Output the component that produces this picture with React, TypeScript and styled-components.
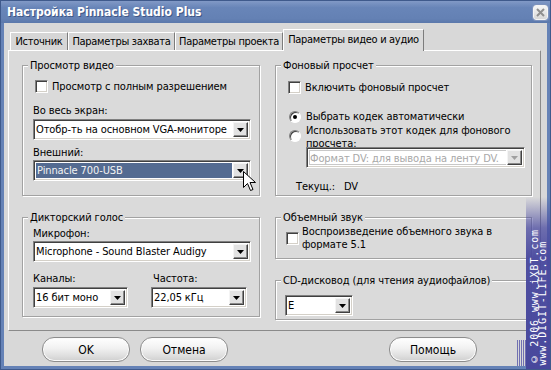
import React from 'react';
import styled, { createGlobalStyle } from 'styled-components';

const FONT = `"DejaVu Sans Condensed", "DejaVu Sans", Tahoma, sans-serif`;

const Global = createGlobalStyle`
  html, body { margin: 0; padding: 0; background: #d8d8d8; }
  body { font-family: ${FONT}; font-size: 11px; color: #000; letter-spacing: -0.1px; }
  * { box-sizing: border-box; }
`;

const Window = styled.div`
  position: relative;
  width: 551px;
  height: 370px;
  display: flex;
  flex-direction: column;
  background: #6582b6;
  border: 1px solid #3f5a8c;
  overflow: hidden;
`;

const TitleBar = styled.div`
  height: 22px;
  flex: none;
  display: flex;
  align-items: center;
  justify-content: space-between;
  padding: 0 2px 0 6px;
  background: linear-gradient(#8199c6, #6885b8 30%, #6481b4 80%, #5b78ab);
`;

const Title = styled.span`
  color: #fff;
  font-weight: bold;
  font-size: 12px;
  letter-spacing: 0;
  text-shadow: 1px 1px 0 #3f5785;
`;

const CloseBtn = styled.div`
  width: 15px;
  height: 15px;
  border-radius: 3px;
  border: 1px solid #f4f4f4;
  background: linear-gradient(#f6f6f6, #d8d8d8);
  box-shadow: 0 0 0 1px #7e93bd;
  display: flex;
  align-items: center;
  justify-content: center;
`;

const Client = styled.div`
  flex: 1;
  margin: 0 3px 3px;
  background: #d8d8d8;
  display: flex;
  flex-direction: column;
  padding: 0 6px 0 4px;
`;

const TabRow = styled.div`
  height: 27px;
  flex: none;
  display: flex;
  align-items: flex-end;
  padding-left: 2px;
  position: relative;
  z-index: 1;
`;

const Tab = styled.div<{ $w: number; $active?: boolean }>`
  width: ${p => p.$w}px;
  height: ${p => (p.$active ? 22 : 18)}px;
  margin-bottom: ${p => (p.$active ? -1 : 0)}px;
  display: flex;
  align-items: center;
  justify-content: center;
  padding-bottom: ${p => (p.$active ? 2 : 0)}px;
  background: ${p => (p.$active ? '#dadada' : '#d6d6d6')};
  border-top: 1px solid #fff;
  border-left: 1px solid #fff;
  border-right: 1px solid #7c7c7c;
  white-space: nowrap;
  letter-spacing: -0.3px;
`;

const Panel = styled.div`
  height: 281px;
  flex: none;
  background: #dadada;
  border: 1px solid;
  border-color: #fff #8a8a8a #8a8a8a #fff;
  padding: 8px 0 0 13px;
  display: grid;
  grid-template-columns: 238px 257px;
  column-gap: 15px;
  align-items: start;
`;

const Column = styled.div<{ $gap: number }>`
  display: flex;
  flex-direction: column;
  gap: ${p => p.$gap}px;
`;

const Group = styled.fieldset<{ $h: number }>`
  margin: 0;
  padding: 0;
  min-width: 0;
  height: ${p => p.$h}px;
  border: 1px solid #a2a2a2;
  box-shadow: 1px 1px 0 #fff, inset 1px 1px 0 #fff;
`;

const Legend = styled.legend`
  margin-left: 5px;
  padding: 0 2px;
  line-height: 13px;
  background: #dadada;
`;

const GroupBody = styled.div<{ $pl: number }>`
  padding-left: ${p => p.$pl}px;
  display: flex;
  flex-direction: column;
  align-items: flex-start;
`;

const Label = styled.div<{ $mt?: number; $ml?: number }>`
  line-height: 13px;
  margin-top: ${p => p.$mt ?? 0}px;
  margin-left: ${p => p.$ml ?? 0}px;
  white-space: nowrap;
`;

const CheckRow = styled.div<{ $mt?: number; $ml?: number; $gap?: number }>`
  display: flex;
  align-items: center;
  gap: ${p => p.$gap ?? 4}px;
  margin-top: ${p => p.$mt ?? 0}px;
  margin-left: ${p => p.$ml ?? 0}px;
  line-height: 13px;
`;

const CheckBox = styled.span`
  width: 13px;
  height: 13px;
  flex: none;
  background: #fff;
  border: 1px solid;
  border-color: #808080 #fff #fff #808080;
  box-shadow: inset 1px 1px 0 #404040, inset -1px -1px 0 #d4d0c8;
`;

const Radio = styled.span<{ $checked?: boolean }>`
  width: 12px;
  height: 12px;
  flex: none;
  border-radius: 50%;
  background: #fff;
  border: 1px solid;
  border-color: #808080 #fff #fff #808080;
  box-shadow: inset 1px 1px 0 #404040;
  display: flex;
  align-items: center;
  justify-content: center;
  &::after {
    content: '';
    width: 4px;
    height: 4px;
    border-radius: 50%;
    background: ${p => (p.$checked ? '#000' : 'transparent')};
  }
`;

const ClipText = styled.div<{ $h: number }>`
  height: ${p => p.$h}px;
  overflow: hidden;
  line-height: 13px;
`;

const Combo = styled.div<{ $w: number; $mt?: number; $ml?: number }>`
  width: ${p => p.$w}px;
  height: 21px;
  margin-top: ${p => p.$mt ?? 0}px;
  margin-left: ${p => p.$ml ?? 0}px;
  display: flex;
  align-items: stretch;
  padding: 2px;
  background: #fff;
  border: 1px solid;
  border-color: #808080 #fff #fff #808080;
  box-shadow: inset 1px 1px 0 #404040, inset -1px -1px 0 #d4d0c8;
`;

const ComboField = styled.div<{ $selected?: boolean; $disabled?: boolean }>`
  flex: 1;
  min-width: 0;
  line-height: 15px;
  padding-left: ${p => (p.$selected ? 1 : 0)}px;
  margin-right: 1px;
  white-space: nowrap;
  overflow: hidden;
  background: ${p => (p.$selected ? '#546b91' : 'transparent')};
  color: ${p => (p.$selected ? '#f2f2f2' : p.$disabled ? '#a8a8a8' : '#000')};
  border: ${p => (p.$disabled ? '1px solid #c8c8c8' : 'none')};
  border-right: none;
`;

const ComboArrow = styled.div<{ $disabled?: boolean }>`
  width: 15px;
  flex: none;
  background: #e2e2e2;
  border: 1px solid;
  border-color: #f4f4f4 #404040 #404040 #f4f4f4;
  box-shadow: inset -1px -1px 0 #8a8a8a;
  display: flex;
  align-items: center;
  justify-content: center;
  padding-right: 1px;
  color: ${p => (p.$disabled ? '#a0a0a0' : '#000')};
`;

const PairRow = styled.div<{ $mt: number }>`
  display: flex;
  margin-top: ${p => p.$mt}px;
  gap: 23px;
`;

const PairCol = styled.div`
  display: flex;
  flex-direction: column;
  align-items: flex-start;
  gap: 2px;
`;

const CurRow = styled.div`
  display: flex;
  margin-top: 12px;
  margin-left: 8px;
  line-height: 13px;
`;

const CurLabel = styled.span`
  width: 48px;
`;

const Footer = styled.div`
  flex: 1;
  display: flex;
  align-items: flex-start;
  padding: 6px 64px 0 34px;
  gap: 10px;
`;

const Button = styled.div<{ $push?: boolean }>`
  width: 88px;
  height: 25px;
  margin-left: ${p => (p.$push ? 'auto' : '0')};
  border-radius: 12px;
  border: 1px solid #8c8c8c;
  background: linear-gradient(#ffffff, #f1f1f1 45%, #e0e0e0 75%, #cfcfcf);
  box-shadow: inset 0 0 0 1px #fafafa;
  display: flex;
  align-items: center;
  justify-content: center;
  font-size: 12px;
  letter-spacing: 0;
`;

const Watermark = styled.div`
  position: absolute;
  right: 0;
  top: 196px;
  bottom: 0;
  width: 24px;
  background: linear-gradient(rgba(74, 74, 160, 0), rgba(74, 74, 160, 0.75) 18%, rgba(72, 72, 158, 0.95) 35%, #48489c);
`;

const WatermarkText = styled.div`
  position: absolute;
  left: 5px;
  bottom: 4px;
  writing-mode: vertical-rl;
  transform: rotate(180deg);
  font-family: "DejaVu Sans Mono", "Liberation Mono", monospace;
  font-size: 10px;
  letter-spacing: 0.9px;
  line-height: 8px;
  color: #fff;
  white-space: nowrap;
`;

const Stripes = styled.div`
  position: absolute;
  left: -9px;
  bottom: 3px;
  width: 9px;
  height: 26px;
  background: repeating-linear-gradient(to right, #5656a8 0 1px, transparent 1px 2px);
  opacity: 0.8;
`;

const Cursor = styled.svg`
  position: absolute;
  left: 242px;
  top: 170px;
`;

const Arrow = ({ disabled }: { disabled?: boolean }) => (
  <ComboArrow $disabled={disabled}>
    <svg width="7" height="4" viewBox="0 0 7 4">
      <path d="M0 0h7L3.5 4z" fill="currentColor" />
    </svg>
  </ComboArrow>
);

const ComboBox = ({
  w, text, mt, ml, selected, disabled,
}: { w: number; text: string; mt?: number; ml?: number; selected?: boolean; disabled?: boolean }) => (
  <Combo $w={w} $mt={mt} $ml={ml}>
    <ComboField $selected={selected} $disabled={disabled}>{text}</ComboField>
    <Arrow disabled={disabled} />
  </Combo>
);

export default function App() {
  return (
    <>
      <Global />
      <Window>
        <TitleBar>
          <Title>Настройка Pinnacle Studio Plus</Title>
          <CloseBtn>
            <svg width="9" height="9" viewBox="0 0 9 9">
              <path d="M1 1l7 7M8 1L1 8" stroke="#8f8f8f" strokeWidth="2" />
            </svg>
          </CloseBtn>
        </TitleBar>
        <Client>
          <TabRow>
            <Tab $w={58}>Источник</Tab>
            <Tab $w={107}>Параметры захвата</Tab>
            <Tab $w={108}>Параметры проекта</Tab>
            <Tab $w={141} $active>Параметры видео и аудио</Tab>
          </TabRow>
          <Panel>
            <Column $gap={15}>
              <Group $h={137}>
                <Legend>Просмотр видео</Legend>
                <GroupBody $pl={10}>
                  <CheckRow $mt={8} $ml={2}>
                    <CheckBox />
                    <span>Просмотр с полным разрешением</span>
                  </CheckRow>
                  <Label $mt={11}>Во весь экран:</Label>
                  <ComboBox w={218} mt={2} text="Отобр-ть на основном VGA-мониторе" />
                  <Label $mt={6}>Внешний:</Label>
                  <ComboBox w={218} mt={1} text="Pinnacle 700-USB" selected />
                </GroupBody>
              </Group>
              <Group $h={106}>
                <Legend>Дикторский голос</Legend>
                <GroupBody $pl={10}>
                  <Label $mt={3}>Микрофон:</Label>
                  <ComboBox w={218} mt={1} text="Microphone - Sound Blaster Audigy" />
                  <PairRow $mt={10}>
                    <PairCol>
                      <Label>Каналы:</Label>
                      <ComboBox w={95} text="16 бит моно" />
                    </PairCol>
                    <PairCol>
                      <Label $ml={2}>Частота:</Label>
                      <ComboBox w={96} text="22,05 кГц" />
                    </PairCol>
                  </PairRow>
                </GroupBody>
              </Group>
            </Column>
            <Column $gap={15}>
              <Group $h={137}>
                <Legend>Фоновый просчет</Legend>
                <GroupBody $pl={12}>
                  <CheckRow $mt={9}>
                    <CheckBox />
                    <span>Включить фоновый просчет</span>
                  </CheckRow>
                  <CheckRow $mt={16} $ml={1} $gap={5}>
                    <Radio $checked />
                    <span>Выбрать кодек автоматически</span>
                  </CheckRow>
                  <CheckRow $mt={1} $ml={1} $gap={5}>
                    <Radio />
                    <ClipText $h={23}>
                      Использовать этот кодек для фонового
                      <br />
                      просчета:
                    </ClipText>
                  </CheckRow>
                  <ComboBox w={219} ml={18} text="Формат DV: для вывода на ленту DV." disabled />
                  <CurRow>
                    <CurLabel>Текущ.:</CurLabel>
                    <span>DV</span>
                  </CurRow>
                </GroupBody>
              </Group>
              <Group $h={48}>
                <Legend>Объемный звук</Legend>
                <GroupBody $pl={10}>
                  <CheckRow $mt={1} $gap={3}>
                    <CheckBox />
                    <span>
                      Воспроизведение объемного звука в
                      <br />
                      формате 5.1
                    </span>
                  </CheckRow>
                </GroupBody>
              </Group>
              <Group $h={46}>
                <Legend>CD-дисковод (для чтения аудиофайлов)</Legend>
                <GroupBody $pl={9}>
                  <ComboBox w={68} mt={8} text="E" />
                </GroupBody>
              </Group>
            </Column>
          </Panel>
          <Footer>
            <Button>OK</Button>
            <Button>Отмена</Button>
            <Button $push>Помощь</Button>
          </Footer>
        </Client>
        <Watermark>
          <Stripes />
          <WatermarkText>
            © 2006 www.iXBT.com
            <br />
            www.DIGIT-LIFE.com
          </WatermarkText>
        </Watermark>
        <Cursor width="13" height="21" viewBox="0 0 13 21">
          <path d="M0.5 0.5v16l4-4 3 7 2.5-1-3-7h5.5z" fill="#fff" stroke="#000" strokeWidth="1" />
        </Cursor>
      </Window>
    </>
  );
}
